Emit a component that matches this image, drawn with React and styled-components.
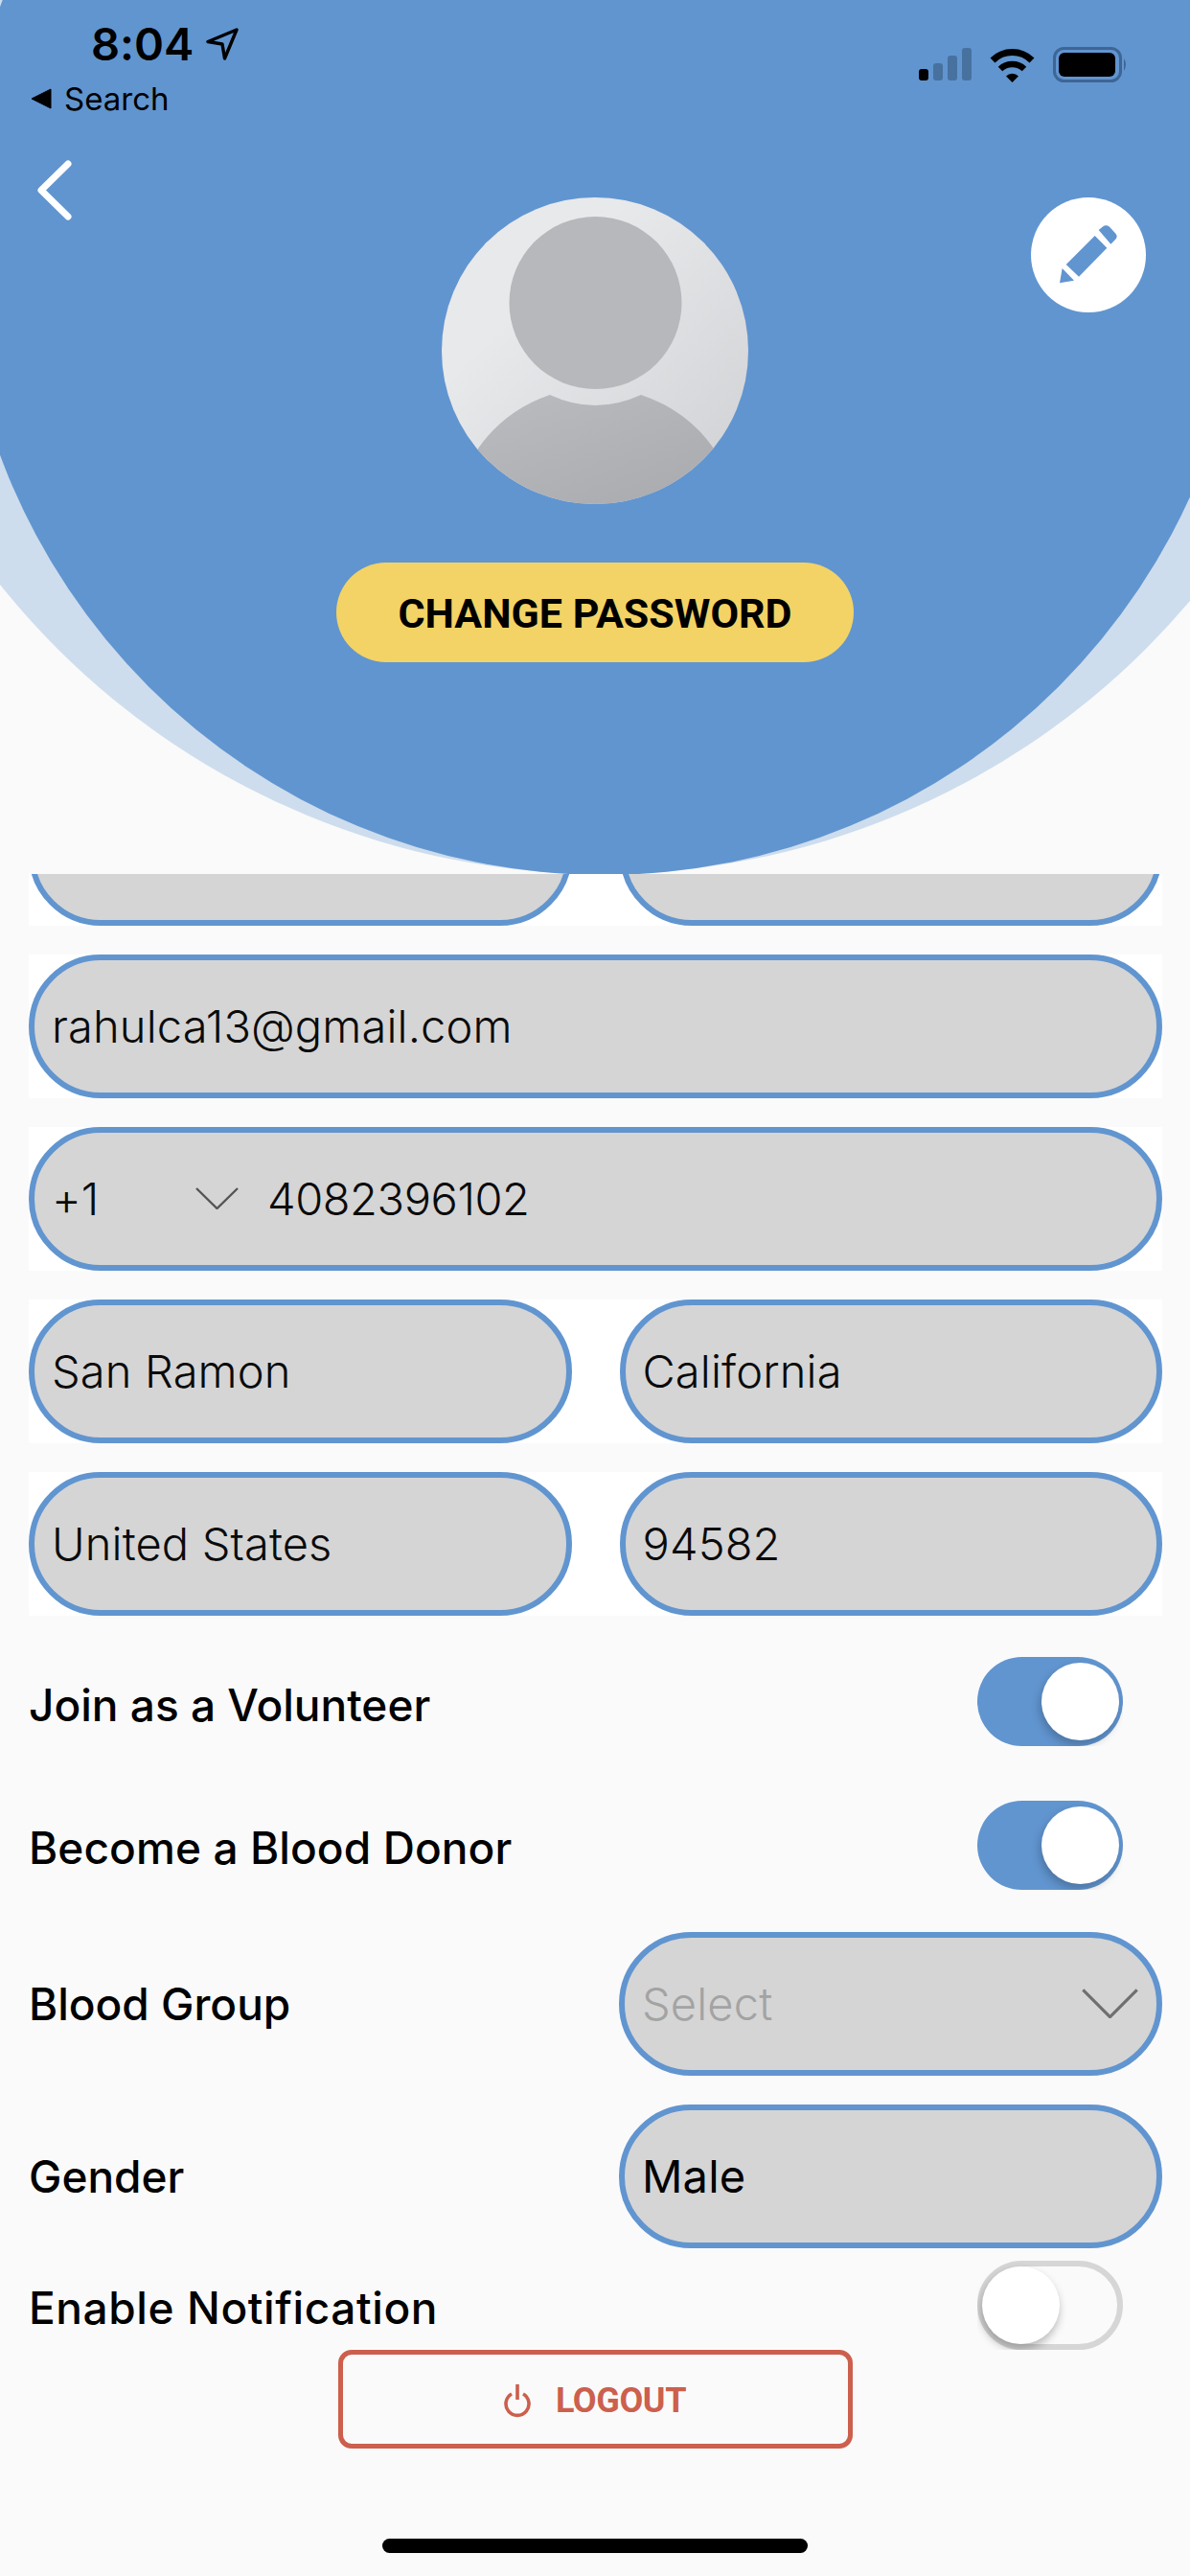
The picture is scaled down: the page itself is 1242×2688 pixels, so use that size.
import React from 'react';
import styled, { createGlobalStyle } from 'styled-components';

const BLUE = '#6195d0';

const GlobalStyle = createGlobalStyle`
  html, body {
    margin: 0;
    padding: 0;
    background: #fafafa;
  }
  * {
    box-sizing: border-box;
  }
`;

const Page = styled.div`
  width: 1242px;
  height: 2688px;
  display: flex;
  flex-direction: column;
  overflow: hidden;
  background: #fafafa;
  font-family: Inter, "Liberation Sans", sans-serif;
  font-variant-ligatures: none;
  color: #000;
`;

const Hero = styled.header`
  position: relative;
  flex: 0 0 912px;
  overflow: hidden;
`;

const Disc = styled.div`
  position: absolute;
  border-radius: 50%;
  left: ${(p) => p.$cx - p.$r}px;
  top: ${(p) => p.$cy - p.$r}px;
  width: ${(p) => p.$r * 2}px;
  height: ${(p) => p.$r * 2}px;
  background: ${(p) => p.$color};
`;

const HeroContent = styled.div`
  position: relative;
  display: flex;
  flex-direction: column;
  align-items: center;
`;

const StatusBar = styled.div`
  width: 100%;
  height: 167px;
  display: flex;
  justify-content: space-between;
  align-items: flex-start;
  padding: 20px 65px 0 32px;
`;

const StatusLeft = styled.div`
  display: flex;
  flex-direction: column;
`;

const TimeRow = styled.div`
  display: flex;
  align-items: center;
  gap: 13px;
  margin-left: 63px;
  height: 52px;
  font-size: 47px;
  font-weight: 600;
  line-height: 52px;
`;

const SearchRow = styled.div`
  display: flex;
  align-items: center;
  gap: 13px;
  margin-top: 13px;
  height: 36px;
  font-size: 33px;
  line-height: 36px;
`;

const StatusIcons = styled.div`
  display: flex;
  align-items: center;
  margin-top: 29px;
  height: 37px;
`;

const TopGrid = styled.div`
  width: 100%;
  display: grid;
  grid-template-columns: 461px 320px 1fr;
  padding-right: 46px;
`;

const BackButton = styled.div`
  padding-left: 38px;
  height: 63px;
`;

const AvatarWrap = styled.div`
  margin-top: 39px;
  width: 320px;
  height: 320px;
`;

const EditButton = styled.div`
  margin-top: 39px;
  justify-self: end;
  width: 120px;
  height: 120px;
  border-radius: 50%;
  background: #fff;
  display: flex;
`;

const PasswordButton = styled.div`
  margin-top: 61px;
  width: 540px;
  height: 104px;
  padding-top: 2px;
  border-radius: 52px;
  background: #f3d365;
  display: flex;
  align-items: center;
  justify-content: center;
  font-family: Roboto, "Liberation Sans", sans-serif;
  font-size: 43px;
  font-weight: 700;
`;

const Scroller = styled.main`
  flex: 0 0 1540px;
  overflow: hidden;
`;

const Form = styled.div`
  margin-top: -96px;
  display: flex;
  flex-direction: column;
`;

const FieldRow = styled.div`
  margin: ${(p) => p.$mt || 0}px 29px 0 30px;
  display: flex;
  gap: 50px;
  background: #fff;
`;

const Field = styled.div`
  flex: 1;
  height: 150px;
  display: flex;
  align-items: center;
  padding: 0 19px 2px 18px;
  border: 6px solid ${BLUE};
  border-radius: 75px;
  background: #d5d5d5;
  font-size: 47px;
  font-weight: 340;
  letter-spacing: 0.15px;
  color: ${(p) => (p.$muted ? '#a3a3a3' : p.$strong ? '#000' : '#0a0a0a')};
  ${(p) => p.$strong && 'font-weight: 400;'}
  ${(p) => p.$spread && 'justify-content: space-between;'}
`;

const CountryCode = styled.span`
  width: 150px;
`;

const PhoneNumber = styled.span`
  margin-left: 30px;
  letter-spacing: -0.4px;
`;

const SettingRow = styled.div`
  margin: ${(p) => p.$mt}px ${(p) => p.$right}px 0 30px;
  display: flex;
  align-items: center;
  justify-content: space-between;
`;

const Label = styled.span`
  font-size: 46px;
  font-weight: 450;
  margin-top: ${(p) => p.$nudge || 0}px;
  letter-spacing: ${(p) => p.$spacing || 0}px;
`;

const HalfSlot = styled.div`
  width: 567px;
  display: flex;
`;

const SwitchBox = styled.div`
  position: relative;
  width: 152px;
  height: 93px;
  overflow: hidden;
`;

const SwitchTrack = styled.div`
  width: 100%;
  height: 100%;
  border-radius: 47px;
  background: ${(p) => (p.$on ? BLUE : '#fafafa')};
  border: ${(p) => (p.$on ? 'none' : '6px solid #d6d6d6')};
`;

const SwitchThumb = styled.div`
  position: absolute;
  top: 6px;
  left: ${(p) => (p.$on ? '67px' : '5px')};
  width: 81px;
  height: 81px;
  border-radius: 50%;
  background: #fff;
  box-shadow: ${(p) => (p.$on ? '-2px 5px 10px rgba(0, 0, 0, 0.22)' : '-1px 5px 10px rgba(0, 0, 0, 0.28)')};
`;

const Footer = styled.footer`
  display: flex;
  flex-direction: column;
  align-items: center;
`;

const LogoutButton = styled.div`
  width: 537px;
  height: 103px;
  padding-top: 2px;
  border: 5px solid #cc5f4d;
  border-radius: 14px;
  display: flex;
  align-items: center;
  justify-content: center;
  gap: 26px;
  font-family: Roboto, "Liberation Sans", sans-serif;
  font-size: 36px;
  font-weight: 700;
  letter-spacing: -0.4px;
  color: #cc5f4d;
`;

const HomeIndicator = styled.div`
  margin-top: 94px;
  width: 444px;
  height: 15px;
  border-radius: 8px;
  background: #000;
`;

const Chevron = ({ width, height, color = '#555' }) => (
  <svg width={width} height={height} viewBox="0 0 45 23" preserveAspectRatio="none" fill="none">
    <polyline points="1,1 22.5,22 44,1" stroke={color} strokeWidth="2.4" />
  </svg>
);

const Switch = ({ on }) => (
  <SwitchBox>
    <SwitchTrack $on={on} />
    <SwitchThumb $on={on} />
  </SwitchBox>
);

const LocationArrow = () => (
  <svg width="34" height="34" viewBox="0 0 34 34" fill="none">
    <path d="M32 2 L2 14.5 L17 17 L19.5 32 Z" stroke="#000" strokeWidth="3.4" strokeLinejoin="round" />
  </svg>
);

const BackTriangle = () => (
  <svg width="22" height="22" viewBox="0 0 22 22">
    <path d="M21 1 V21 L1 11 Z" fill="#000" stroke="#000" strokeWidth="1" strokeLinejoin="round" />
  </svg>
);

const SignalIcon = () => (
  <svg width="56" height="35" viewBox="0 0 56 35" style={{ marginRight: 18 }}>
    <rect x="0" y="22" width="10" height="12" rx="3" fill="#000" />
    <rect x="15" y="16" width="10" height="18" rx="3" fill="#47719f" />
    <rect x="30" y="8" width="10" height="26" rx="3" fill="#47719f" />
    <rect x="45" y="0" width="10" height="34" rx="3" fill="#47719f" />
  </svg>
);

const WifiIcon = () => (
  <svg width="47" height="36" viewBox="0 0 47 36" fill="none" style={{ marginRight: 19 }}>
    <path d="M3 13 A 29 29 0 0 1 44 13" stroke="#000" strokeWidth="7" />
    <path d="M11 22 A 18 18 0 0 1 36 22" stroke="#000" strokeWidth="6.5" />
    <path d="M17 29.5 A 9 9 0 0 1 30 29.5 L23.5 36 Z" fill="#000" />
  </svg>
);

const BatteryIcon = () => (
  <svg width="78" height="37" viewBox="0 0 78 37">
    <rect x="1.5" y="1.5" width="69" height="34" rx="10" fill="none" stroke="#3d6596" strokeWidth="3" />
    <rect x="6" y="6" width="59" height="25" rx="6" fill="#000" />
    <path d="M74 12 Q78 18 74 25 Z" fill="#3d6596" />
  </svg>
);

const BackChevron = () => (
  <svg width="37" height="63" viewBox="0 0 37 63" fill="none">
    <path d="M33 4 L5 31.5 L33 59" stroke="#fff" strokeWidth="7" strokeLinecap="round" strokeLinejoin="round" />
  </svg>
);

const PencilIcon = () => (
  <svg width="120" height="120" viewBox="0 0 360 360" fill={BLUE}>
    <path d="M212 102 L224 92 Q235 84 246 92 L264 112 Q274 123 264 132 L250 146 Z" />
    <path d="M200 120 L238 158 L150 248 L110 210 Z" />
    <path d="M98 222 L135 260 L90 268 Z" />
  </svg>
);

const AvatarImage = () => (
  <svg width="320" height="320" viewBox="0 0 320 320">
    <defs>
      <linearGradient id="avatarBg" x1="0.3" y1="0.3" x2="1" y2="1">
        <stop offset="0" stopColor="#e8e9eb" />
        <stop offset="1" stopColor="#cfd0d3" />
      </linearGradient>
      <linearGradient id="avatarFg" x1="0.2" y1="0" x2="1" y2="1">
        <stop offset="0" stopColor="#b9babd" />
        <stop offset="1" stopColor="#a9aaae" />
      </linearGradient>
      <clipPath id="avatarClip">
        <circle cx="160" cy="160" r="160" />
      </clipPath>
    </defs>
    <circle cx="160" cy="160" r="160" fill="url(#avatarBg)" />
    <circle cx="160.5" cy="110" r="90" fill="#b7b8bb" />
    <path
      clipPath="url(#avatarClip)"
      d="M38 262 Q66 222 113 206 Q160 228 208 206 Q256 222 284 262 L284 320 L38 320 Z"
      fill="url(#avatarFg)"
    />
  </svg>
);

const PowerIcon = () => (
  <svg width="28" height="36" viewBox="0 0 28 36" fill="none">
    <path d="M8 11 A 12 12 0 1 0 20 11" stroke="#cc5f4d" strokeWidth="3.6" />
    <path d="M14 1 V17" stroke="#cc5f4d" strokeWidth="3.6" />
  </svg>
);

export default function App() {
  return (
    <Page>
      <GlobalStyle />
      <Hero>
        <Disc $cx={628} $cy={108} $r={804} $color="#cddded" />
        <Disc $cx={630} $cy={241} $r={672} $color={BLUE} />
        <HeroContent>
          <StatusBar>
            <StatusLeft>
              <TimeRow>
                8:04
                <LocationArrow />
              </TimeRow>
              <SearchRow>
                <BackTriangle />
                Search
              </SearchRow>
            </StatusLeft>
            <StatusIcons>
              <SignalIcon />
              <WifiIcon />
              <BatteryIcon />
            </StatusIcons>
          </StatusBar>
          <TopGrid>
            <BackButton>
              <BackChevron />
            </BackButton>
            <AvatarWrap>
              <AvatarImage />
            </AvatarWrap>
            <EditButton>
              <PencilIcon />
            </EditButton>
          </TopGrid>
          <PasswordButton>CHANGE PASSWORD</PasswordButton>
        </HeroContent>
      </Hero>
      <Scroller>
        <Form>
          <FieldRow>
            <Field />
            <Field />
          </FieldRow>
          <FieldRow $mt={30}>
            <Field>rahulca13@gmail.com</Field>
          </FieldRow>
          <FieldRow $mt={30}>
            <Field>
              <CountryCode>+1</CountryCode>
              <Chevron width={45} height={23} />
              <PhoneNumber>4082396102</PhoneNumber>
            </Field>
          </FieldRow>
          <FieldRow $mt={30}>
            <Field>San Ramon</Field>
            <Field>California</Field>
          </FieldRow>
          <FieldRow $mt={30}>
            <Field>United States</Field>
            <Field>94582</Field>
          </FieldRow>
          <SettingRow $mt={43} $right={70}>
            <Label $nudge={6}>Join as a Volunteer</Label>
            <Switch on />
          </SettingRow>
          <SettingRow $mt={57} $right={70}>
            <Label $nudge={4} $spacing={0.1}>Become a Blood Donor</Label>
            <Switch on />
          </SettingRow>
          <SettingRow $mt={44} $right={29}>
            <Label>Blood Group</Label>
            <HalfSlot>
              <Field $muted $spread>
                Select
                <Chevron width={59} height={31} color="#6f6f6f" />
              </Field>
            </HalfSlot>
          </SettingRow>
          <SettingRow $mt={30} $right={29}>
            <Label>Gender</Label>
            <HalfSlot>
              <Field $strong>Male</Field>
            </HalfSlot>
          </SettingRow>
          <SettingRow $mt={13} $right={70}>
            <Label $nudge={4} $spacing={0.6}>Enable Notification</Label>
            <Switch />
          </SettingRow>
        </Form>
      </Scroller>
      <Footer>
        <LogoutButton>
          <PowerIcon />
          LOGOUT
        </LogoutButton>
        <HomeIndicator />
      </Footer>
    </Page>
  );
}
